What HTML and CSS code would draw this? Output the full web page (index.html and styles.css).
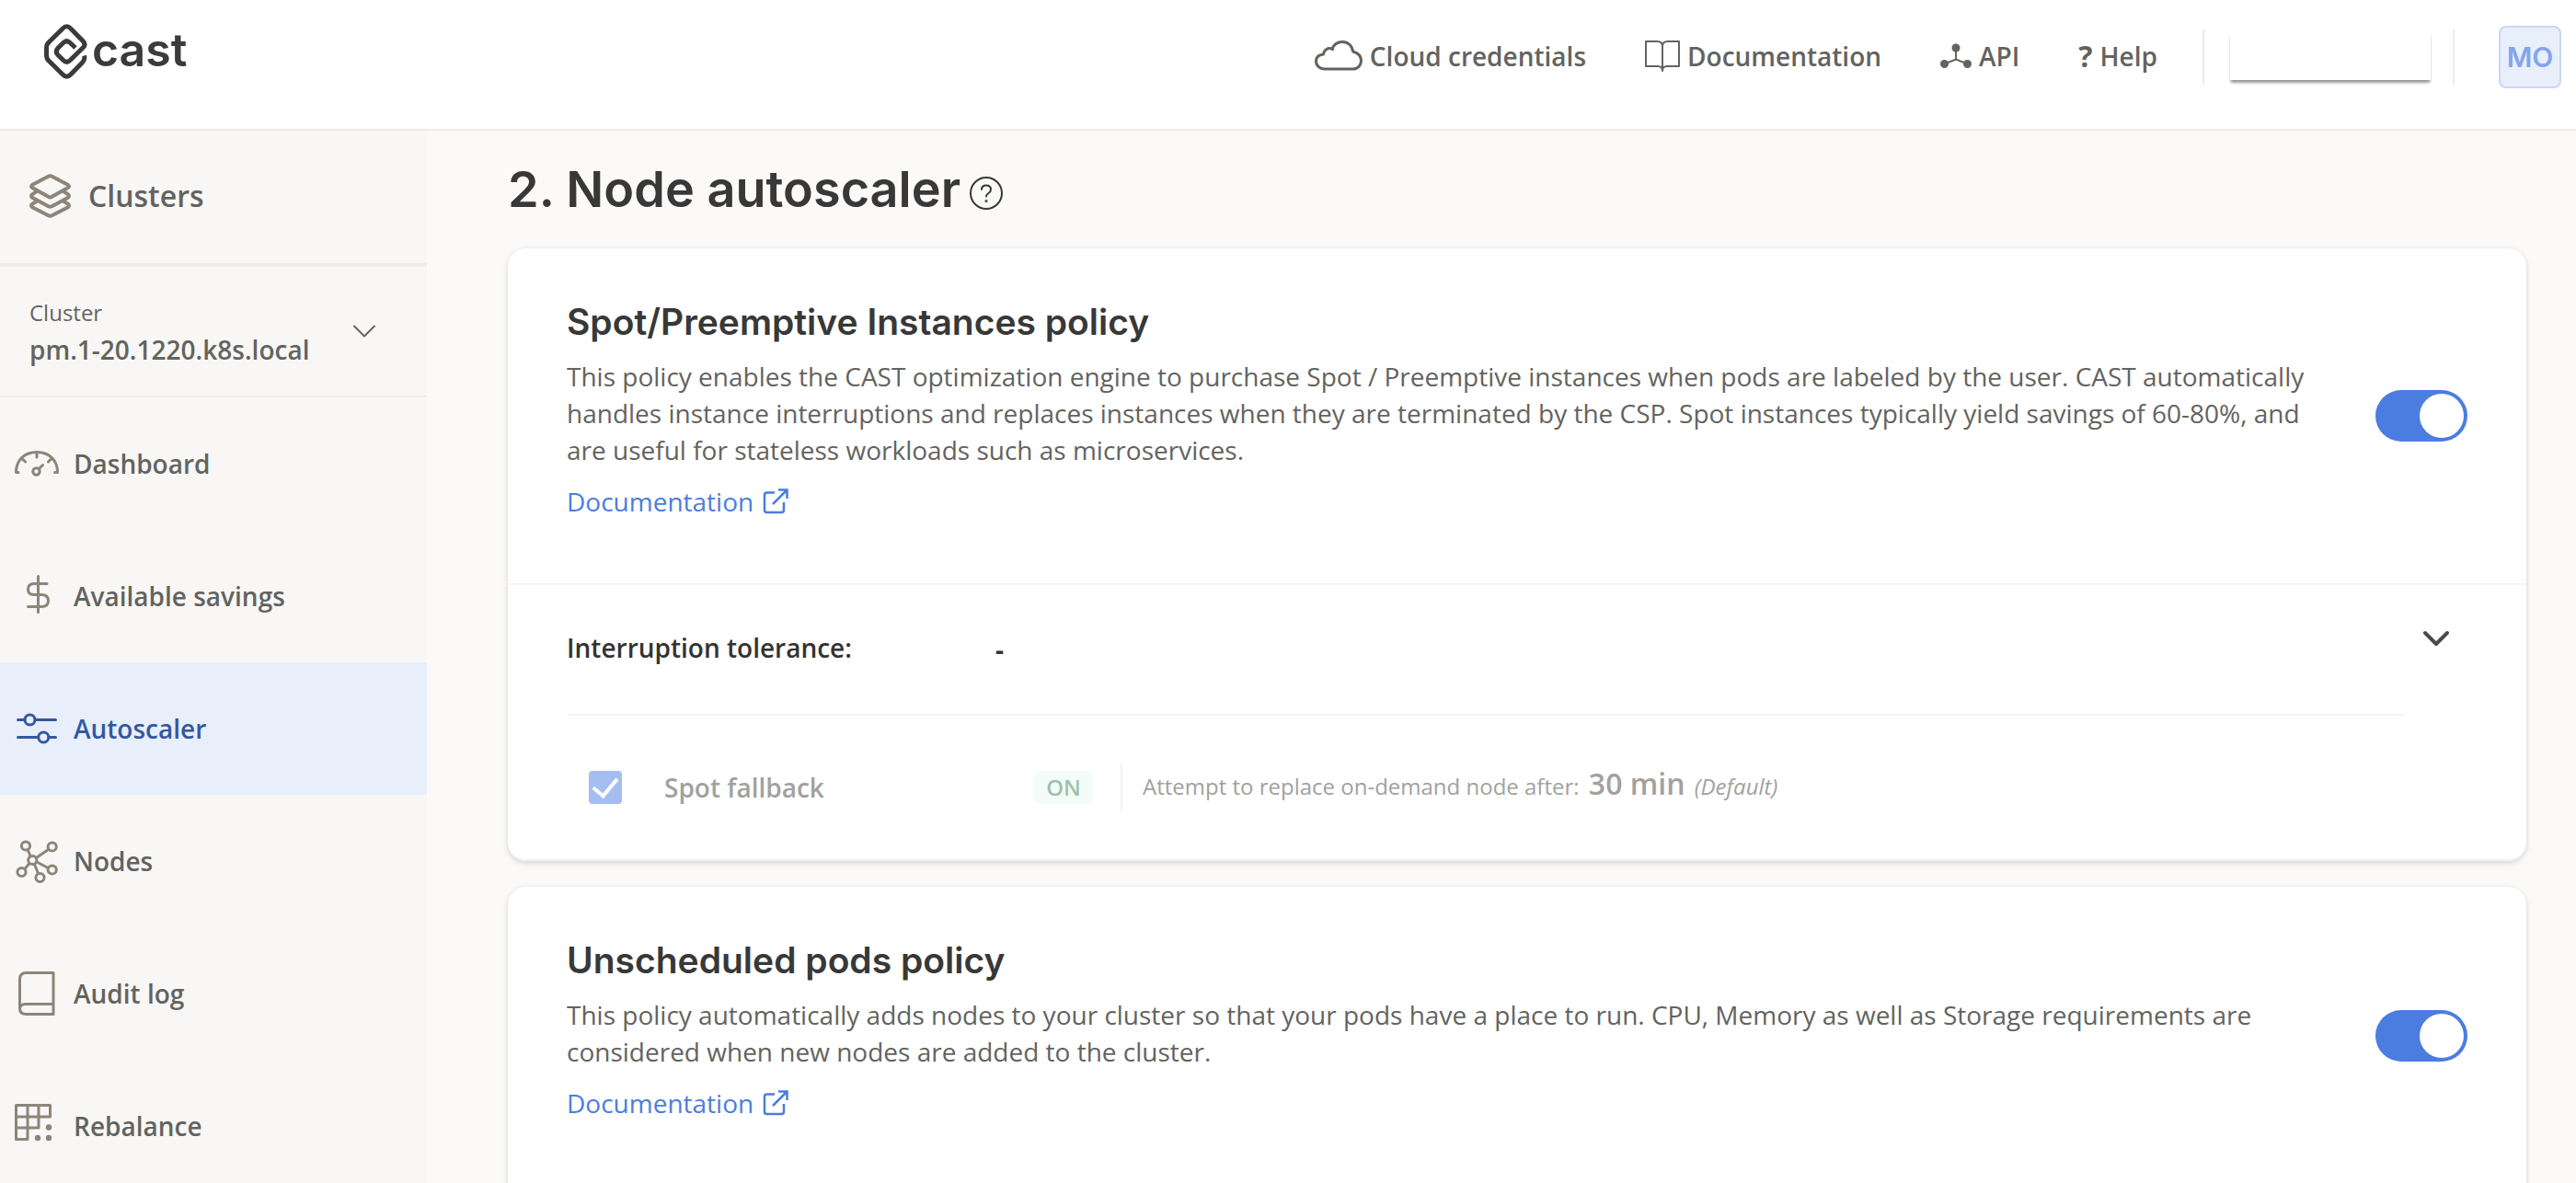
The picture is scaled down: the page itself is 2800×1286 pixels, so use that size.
FILE: index.html
```html
<!DOCTYPE html>
<html lang="en">
<head>
<meta charset="utf-8">
<title>Autoscaler</title>
<link rel="stylesheet" href="styles.css">
</head>
<body>
<header class="topbar">
  <a class="logo" href="#">
    <svg width="48" height="60" viewBox="0 0 48 60" fill="none" stroke="currentColor" stroke-width="5" aria-hidden="true">
      <path d="M34 26 28.200 20.500Q24.500 17 20.800 20.500L15 26.300Q11.500 30 15 33.700L20.800 39.500Q24.500 43 28.200 39.500L42.500 25.500Q45.500 22.500 42.500 19L28.800 5Q24.500 .5 20.200 5L5.500 19.500Q2.500 22 2.500 26V34Q2.500 38 5.500 40.500L20.200 55Q24.500 59.500 28.800 55L41.500 42Q44.800 38.500 43.500 34.500"/>
    </svg>
    <span class="logo-text">cast</span>
  </a>
  <nav class="toplinks">
    <a class="toplink" href="#">
      <svg width="52" height="34" viewBox="0 0 52 34" fill="none" stroke="currentColor" stroke-width="3" stroke-linejoin="round" aria-hidden="true">
        <path d="M11 31C5.500 31 1.500 27.500 1.500 22.500C1.500 18 5 15.500 9.500 15C10 10.500 14 7.500 19 9C21 4.500 25 1.500 30 1.500C36.500 1.500 41 6 41.500 12C47 13.500 50.500 17 50.500 22C50.500 27 47 31 41.500 31Z"/><path d="M18.500 8.500 20.500 10.500"/>
      </svg>
      <span>Cloud credentials</span>
    </a>
    <a class="toplink" href="#">
      <svg width="38" height="34" viewBox="0 0 38 34" fill="none" stroke="currentColor" stroke-width="2" stroke-linejoin="round" aria-hidden="true">
        <path d="M1 1H13Q19 1 19 6Q19 1 25 1H37V28H24Q19 28 19 33Q19 28 14 28H1ZM19 6V32"/>
      </svg>
      <span>Documentation</span>
    </a>
    <a class="toplink" href="#">
      <svg width="34" height="28" viewBox="0 0 34 28" fill="currentColor" aria-hidden="true">
        <circle cx="17" cy="5" r="4.500"/><circle cx="4.500" cy="22.500" r="4.500"/><circle cx="29.500" cy="22.500" r="4.500"/>
        <path d="M17 5V17.500M4.500 22.500 17 17.500 29.500 22.500" fill="none" stroke="currentColor" stroke-width="2"/>
      </svg>
      <span>API</span>
    </a>
    <a class="toplink" href="#"><b class="question">?</b><span>Help</span></a>
  </nav>
  <div class="account">
    <button class="org" type="button" aria-label="Organization"></button>
    <button class="avatar" type="button">MO</button>
  </div>
</header>
<div class="layout">
  <aside class="sidebar">
    <a class="clusters" href="#">
      <svg width="46" height="48" viewBox="0 0 46 48" fill="none" stroke="currentColor" stroke-width="4" stroke-linejoin="round" aria-hidden="true">
        <path d="M20.500 2.800Q22.500 1.700 24.500 2.800L42 12Q44 13.500 42 15L24.500 24.800Q22.500 26 20.500 24.800L3 15Q1 13.500 3 12Z"/>
        <path d="M8.500 18.500 3 22.300Q1 24 3 25.700L20.500 35.200Q22.500 36.300 24.500 35.200L42 25.700Q44 24 42 22.300L36.500 18.500"/>
        <path d="M8.500 29.500 3 32.800Q1 34.500 3 36.200L20.500 45.200Q22.500 46.300 24.500 45.200L42 36.200Q44 34.500 42 32.800L36.500 29.500"/>
      </svg>
      <span>Clusters</span>
    </a>
    <button class="picker" type="button">
      <span class="picker-text"><span class="picker-label">Cluster</span><span class="picker-name">pm.1-20.1220.k8s.local</span></span>
      <svg width="24" height="14" viewBox="0 0 24 14" fill="none" stroke="currentColor" stroke-width="2" stroke-linecap="round" stroke-linejoin="round" aria-hidden="true"><path d="M1 1.500 12 12.500 23 1.500"/></svg>
    </button>
    <nav class="menu">
      <a class="item" href="#">
        <svg class="icon" viewBox="0 0 48 48" stroke-width="3" aria-hidden="true"><path d="M4 33.500H1.500C1.500 20 11 11.500 24 11.500S46.500 20 46.500 33.500H43.500M24 12V17M9 19.500 11.500 22M39 19.500 36.500 22M26.500 29.500 30.500 25.500"/><circle cx="23.500" cy="32.500" r="3.700"/></svg>
        <span>Dashboard</span>
      </a>
      <a class="item" href="#">
        <svg class="icon" viewBox="0 0 48 48" stroke-width="3" aria-hidden="true"><path d="M25.500 2.500V41.500M35 10.500H21Q14.500 10.500 14.500 16.500T21 22.500H30Q36.500 23 36.500 29T30 35.500H14.500"/></svg>
        <span>Available savings</span>
      </a>
      <a class="item item-active" href="#" aria-current="page">
        <svg class="icon" viewBox="0 0 48 48" stroke-width="3" aria-hidden="true"><path d="M3.500 14.500H11M22 14.500H44.500M3.500 33.500H25.500M37 33.500H44.500"/><circle cx="16.500" cy="14.500" r="5.500"/><circle cx="31.300" cy="33.500" r="5.500"/></svg>
        <span>Autoscaler</span>
      </a>
      <a class="item" href="#">
        <svg class="icon" viewBox="0 0 48 48" stroke-width="3" aria-hidden="true"><circle cx="12" cy="7.500" r="4.600"/><circle cx="40.700" cy="8.500" r="4.600"/><circle cx="19.300" cy="23" r="4.600"/><circle cx="7.500" cy="36" r="4.600"/><circle cx="27.500" cy="42" r="4.600"/><circle cx="40.700" cy="33.500" r="4.600"/><path d="M14.200 12 17 18.500M23.500 20.500 36.500 11.500M24 25 36.200 31.500M21.500 27.500 25.500 37.500M16 26.500 11 32.500"/></svg>
        <span>Nodes</span>
      </a>
      <a class="item" href="#">
        <svg class="icon" viewBox="0 0 48 48" stroke-width="3" aria-hidden="true"><path d="M42 1.500H12.500Q5.500 1.500 5.500 8.500V40Q5.500 46.500 12.500 46.500H42V1.500M42 35.500H11Q5.500 36 5.500 41"/></svg>
        <span>Audit log</span>
      </a>
      <a class="item" href="#">
        <svg class="icon" viewBox="0 0 48 48" stroke-width="3" aria-hidden="true"><path d="M1.500 1.500H38.500V14H1.500ZM1.500 14V38.500H14V1.500M1.500 26H26V1.500"/><g fill="currentColor" stroke="none"><circle cx="37" cy="25.500" r="3.200"/><circle cx="25" cy="37" r="3.200"/><circle cx="37" cy="37" r="3.200"/></g></svg>
        <span>Rebalance</span>
      </a>
    </nav>
  </aside>
  <main class="content">
    <div class="page-head">
      <h1>2. Node autoscaler</h1>
      <button class="hint" type="button" aria-label="About the node autoscaler">
        <svg width="36" height="36" viewBox="0 0 36 36" fill="none" stroke="currentColor" stroke-width="2" stroke-linecap="round" aria-hidden="true"><circle cx="18" cy="18" r="17"/><path d="M13 14Q13 9.500 18 9.500T23 14Q23 16.500 20.500 18T18 21.500"/><circle cx="18" cy="26.500" r=".6"/></svg>
      </button>
    </div>
    <section class="card">
      <div class="policy">
        <div class="policy-text">
          <h2 id="spot-title">Spot/Preemptive Instances policy</h2>
          <p>This policy enables the CAST optimization engine to purchase Spot / Preemptive instances when pods are labeled by the user. CAST automatically handles instance interruptions and replaces instances when they are terminated by the CSP. Spot instances typically yield savings of 60-80%, and are useful for stateless workloads such as microservices.</p>
          <a class="doc-link" href="#"><span>Documentation</span><svg width="28" height="28" viewBox="0 0 28 28" fill="none" stroke="currentColor" stroke-width="2.500" aria-hidden="true"><path d="M13 4.500H4.500Q2 4.500 2 7V23.500Q2 26 4.500 26H20.500Q23 26 23 23.500V15M17 1.500H26.500V11M26 2 11 17"/></svg></a>
        </div>
        <input class="toggle" type="checkbox" role="switch" aria-labelledby="spot-title" checked>
      </div>
      <div class="details">
        <div class="tolerance">
          <span class="tolerance-label">Interruption tolerance:</span>
          <span class="tolerance-value">-</span>
          <button class="expand" type="button" aria-label="Expand">
            <svg width="28" height="18" viewBox="0 0 28 18" fill="none" stroke="currentColor" stroke-width="4" stroke-linecap="round" stroke-linejoin="round" aria-hidden="true"><path d="M2 3 14 15 26 3"/></svg>
          </button>
        </div>
        <div class="fallback">
          <input class="tick" type="checkbox" id="fallback" checked disabled>
          <label class="fallback-label" for="fallback">Spot fallback</label>
          <span class="state">ON</span>
          <p class="attempt">Attempt to replace on-demand node after: <strong>30 min</strong> <em>(Default)</em></p>
        </div>
      </div>
    </section>
    <section class="card card-last">
      <div class="policy">
        <div class="policy-text">
          <h2 id="pods-title">Unscheduled pods policy</h2>
          <p>This policy automatically adds nodes to your cluster so that your pods have a place to run. CPU, Memory as well as Storage requirements are considered when new nodes are added to the cluster.</p>
          <a class="doc-link" href="#"><span>Documentation</span><svg width="28" height="28" viewBox="0 0 28 28" fill="none" stroke="currentColor" stroke-width="2.500" aria-hidden="true"><path d="M13 4.500H4.500Q2 4.500 2 7V23.500Q2 26 4.500 26H20.500Q23 26 23 23.500V15M17 1.500H26.500V11M26 2 11 17"/></svg></a>
        </div>
        <input class="toggle" type="checkbox" role="switch" aria-labelledby="pods-title" checked>
      </div>
    </section>
  </main>
</div>
</body>
</html>
```
FILE: styles.css
```css
*{box-sizing:border-box}
body{margin:0;height:100vh;display:flex;flex-direction:column;background:#fbfaf8;color:#63635f;font:28px/40px "Open Sans",sans-serif}
a{color:inherit;text-decoration:none}
button{border:0;padding:0;background:none;color:inherit;font:inherit;cursor:pointer}
svg{display:block;flex:none}
h1,h2,p{margin:0}

.topbar{flex:none;display:flex;align-items:flex-start;height:142px;padding:26px 16px 0 48px;background:#fff;border-bottom:2px solid #ebebeb}
.logo{display:flex;align-items:flex-start;gap:4px;color:#3b3b3b}
.logo-text{font:600 50px/56px Inter,sans-serif}
.toplinks{display:flex;align-items:center;gap:64px;height:70px;margin-left:auto;font-weight:600}
.toplink{display:flex;align-items:center;gap:8px}
.question{font-size:32px;font-weight:700}
.account{display:flex;align-items:center;height:72px;margin-left:49px}
.org{width:274px;height:60px;border:solid #ebebeb;border-width:0 2px;padding:4px 24px 5px 28px}
.org::before{content:"";display:block;height:51px;background:#fff;box-shadow:0 4px 3px -1px rgba(0,0,0,.35),0 2px 2px rgba(0,0,0,.12)}
.avatar{width:68px;height:68px;margin-left:48px;border:2px solid #c8d7f6;border-radius:8px;background:#e8effb;color:#84a5eb;font:600 30px/40px Inter,sans-serif}

.layout{flex:1;min-height:0;display:flex}
.sidebar{flex:none;width:464px;overflow:hidden;background:#f8f7f5}
.clusters{display:flex;align-items:center;gap:18px;height:148px;padding:0 32px 2px;border-bottom:4px solid #ececea;color:#8c8579;font-size:32px;font-weight:600}
.clusters span,.item span{color:#63635f}
.picker{display:flex;align-items:center;justify-content:space-between;width:100%;height:142px;padding:0 56px 0 32px;border-bottom:2px solid #ececea;text-align:left}
.picker-text{display:flex;flex-direction:column}
.picker-label{font-size:24px}
.picker-name{font-weight:600}
.item{display:flex;align-items:center;gap:16px;height:144px;padding:0 16px;color:#8c8579;font-weight:600}
.icon{width:48px;height:48px;overflow:visible;fill:none;stroke:currentColor;stroke-linecap:round;stroke-linejoin:round}
.item-active{background:#e8effb}
.item-active,.item-active span{color:#3358a1}

.content{flex:1;min-width:0;overflow:hidden;padding:28px 54px 28px 88px}
.page-head{display:flex;align-items:center;gap:10px;height:72px;margin-bottom:28px;color:#383838}
h1{font:600 54px/64px Inter,sans-serif}
.hint{margin-top:8px}
.card{margin-bottom:28px;border-radius:20px;background:#fff;box-shadow:0 2px 6px rgba(0,0,0,.16)}
.card-last{padding-bottom:80px}
.policy{display:flex;align-items:center;gap:64px;padding:0 64px;border-bottom:2px solid #f5f5f5}
.policy-text{flex:1;padding:56px 0 69px}
h2{margin-bottom:15px;color:#383838;font:600 39px/48px Inter,sans-serif}
.doc-link{display:flex;align-items:center;gap:10px;width:fit-content;margin-top:16px;color:#4b7de0}
.toggle{appearance:none;flex:none;display:flex;justify-content:flex-end;width:100px;height:56px;margin:0;padding:4px;border-radius:28px;background:#4b7de0}
.toggle::before{content:"";width:48px;height:48px;border-radius:50%;background:#fff}
.details{padding:0 64px;border-bottom:2px solid #f2f2f1;border-radius:0 0 20px 20px}
.tolerance{display:flex;align-items:center;height:142px;margin-right:68px;border-bottom:2px solid #f5f5f5;color:#333;font-weight:600}
.tolerance-label{width:466px;padding-bottom:4px}
.tolerance-value{flex:1;font-weight:700}
.expand{align-self:flex-start;margin:49px -48px 0 0;color:#4a4a46}
.fallback{display:flex;align-items:center;height:156px;padding-left:24px;opacity:.6}
.tick{appearance:none;display:grid;place-items:center;width:36px;height:36px;margin:0 46px 0 0;border-radius:4px;background:#6b93e8}
.tick::before{content:"";width:12px;height:22px;margin-bottom:6px;border:solid #fff;border-width:0 4px 4px 0;rotate:40deg}
.fallback-label{width:402px;font-weight:600}
.state{width:64px;border-radius:6px;background:#ecfbf4;color:#5c9a71;font-size:24px;font-weight:600;line-height:36px;text-align:center}
.attempt{height:52px;margin-left:30px;padding-left:22px;border-left:2px solid #ebebeb;font-size:24px;line-height:44px}
.attempt strong{margin:0 4px;font-size:32px;font-weight:600}
```
